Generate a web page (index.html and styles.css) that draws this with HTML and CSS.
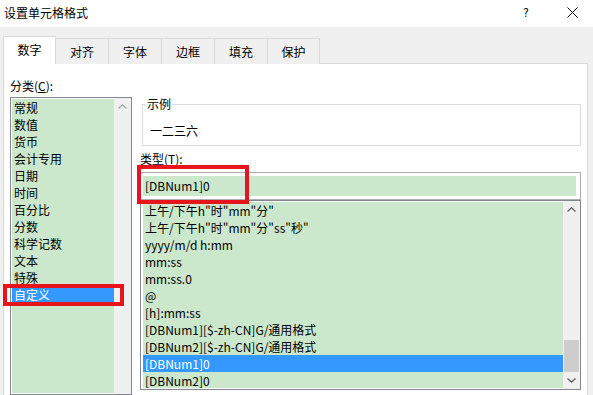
FILE: index.html
```html
<!DOCTYPE html>
<html lang="zh-CN">
<head>
<meta charset="utf-8">
<title>设置单元格格式</title>
<link rel="stylesheet" href="styles.css">
</head>
<body>
<div class="dialog">
  <div class="titlebar">
    <span class="title">设置单元格格式</span>
    <div class="title-btns">
      <span class="help">?</span>
      <svg class="close" width="11" height="11" viewBox="0 0 11 11"><path d="M0.5 0.5L10.5 10.5M10.5 0.5L0.5 10.5" stroke="#000" stroke-width="1" fill="none"/></svg>
    </div>
  </div>
  <div class="main">
    <div class="tabs">
      <div class="tab active">数字</div>
      <div class="tab">对齐</div>
      <div class="tab">字体</div>
      <div class="tab">边框</div>
      <div class="tab">填充</div>
      <div class="tab last">保护</div>
    </div>
    <div class="panel">
      <div class="left-col">
        <div class="label">分类(<u>C</u>):</div>
        <div class="listbox cat">
          <div class="items">
            <div class="item">常规</div>
            <div class="item">数值</div>
            <div class="item">货币</div>
            <div class="item">会计专用</div>
            <div class="item">日期</div>
            <div class="item">时间</div>
            <div class="item">百分比</div>
            <div class="item">分数</div>
            <div class="item">科学记数</div>
            <div class="item">文本</div>
            <div class="item">特殊</div>
            <div class="item sel">自定义</div>
          </div>
          <div class="vscroll disabled">
            <div class="sbtn"><svg width="9" height="5" viewBox="0 0 9 5"><path d="M0.5 4.5L4.5 0.8L8.5 4.5" stroke="currentColor" stroke-width="1.3" fill="none"/></svg></div>
          </div>
          <span class="redbox cat-red"></span>
        </div>
      </div>
      <div class="right-col">
        <fieldset class="sample">
          <legend>示例</legend>
          <div class="sample-val">一二三六</div>
        </fieldset>
        <div class="label type-label">类型(<u>T</u>):</div>
        <div class="typebox">
          <div class="typeinput">[DBNum1]0</div>
          <span class="redbox type-red"></span>
        </div>
        <div class="listbox fmt">
          <div class="items">
            <div class="item">上午/下午h"时"mm"分"</div>
            <div class="item">上午/下午h"时"mm"分"ss"秒"</div>
            <div class="item">yyyy/m/d h:mm</div>
            <div class="item">mm:ss</div>
            <div class="item">mm:ss.0</div>
            <div class="item">@</div>
            <div class="item">[h]:mm:ss</div>
            <div class="item">[DBNum1][$-zh-CN]G/通用格式</div>
            <div class="item">[DBNum2][$-zh-CN]G/通用格式</div>
            <div class="item sel">[DBNum1]0</div>
            <div class="item">[DBNum2]0</div>
          </div>
          <div class="vscroll">
            <div class="sbtn"><svg width="9" height="5" viewBox="0 0 9 5"><path d="M0.5 4.5L4.5 0.8L8.5 4.5" stroke="currentColor" stroke-width="1.3" fill="none"/></svg></div>
            <div class="track"><div class="thumb"></div></div>
            <div class="sbtn"><svg width="9" height="5" viewBox="0 0 9 5"><path d="M0.5 0.5L4.5 4.2L8.5 0.5" stroke="currentColor" stroke-width="1.3" fill="none"/></svg></div>
          </div>
        </div>
      </div>
    </div>
  </div>
</div>
</body>
</html>
```

FILE: styles.css
```css
html, body {
  margin: 0;
  padding: 0;
}
body {
  width: 593px;
  height: 395px;
  overflow: hidden;
  background: #f0f0f0;
  font-family: "Noto Sans CJK SC", "Microsoft YaHei", sans-serif;
  font-size: 12px;
  color: #000;
}
.dialog {
  display: flex;
  flex-direction: column;
  height: 395px;
}
.titlebar {
  height: 27px;
  flex: none;
  background: #fff;
  display: flex;
  align-items: center;
  padding-left: 4px;
  padding-bottom: 2px;
  box-sizing: border-box;
}
.title {
  font-size: 12px;
  line-height: 16px;
}
.title-btns {
  margin-left: auto;
  display: flex;
  align-items: center;
}
.help {
  width: 20px;
  text-align: center;
  font-size: 13px;
  line-height: 16px;
  margin-right: 31px;
  font-family: "DejaVu Sans", sans-serif;
  transform: scaleX(0.8);
}
.close {
  margin-right: 15px;
  display: block;
}
.main {
  flex: 1;
  display: flex;
  flex-direction: column;
  padding: 9px 5px 0 3px;
  min-height: 0;
}
.tabs {
  display: flex;
  align-items: flex-end;
  height: 28px;
  flex: none;
  position: relative;
  z-index: 1;
  margin-bottom: -1px;
}
.tab {
  box-sizing: border-box;
  width: 54px;
  height: 26px;
  border: 1px solid #d9d9d9;
  border-bottom: none;
  margin-left: -1px;
  display: flex;
  align-items: center;
  justify-content: center;
  background: #f0f0f0;
  line-height: 16px;
  padding-top: 1px;
}
.tab.active {
  width: 53px;
  height: 28px;
  margin-left: 0;
  background: #fff;
  border-color: #d9d9d9;
  padding-top: 0;
  padding-bottom: 2px;
}
.tab.last {
  width: 53px;
}
.panel {
  flex: 1;
  background: #fff;
  border: 1px solid #d9d9d9;
  border-bottom: none;
  display: flex;
  padding: 14px 5px 0 6px;
  gap: 8px;
  min-height: 0;
}
.label {
  line-height: 16px;
  height: 16px;
}
.left-col {
  width: 122px;
  flex: none;
  display: flex;
  flex-direction: column;
}
.left-col .label {
  margin-bottom: 3px;
}
.listbox {
  position: relative;
  box-sizing: border-box;
  border: 1px solid #828790;
  background: #fff;
  display: flex;
  padding: 1px 0 1px 1px;
}
.listbox .items {
  flex: 1;
  background: #cbe8cd;
  min-width: 0;
}
.item {
  height: 17px;
  line-height: 17px;
  padding-left: 2px;
  white-space: nowrap;
}
.item.sel {
  background: #3399ff;
  color: #fff;
}
.listbox.cat {
  height: 320px;
  padding-top: 1px;
}
.vscroll {
  width: 17px;
  flex: none;
  background: #f0f0f0;
  display: flex;
  flex-direction: column;
  color: #606060;
  margin-top: -1px;
  margin-bottom: -1px;
}
.vscroll.disabled {
  color: #a8a8a8;
}
.sbtn {
  height: 17px;
  display: flex;
  align-items: center;
  justify-content: center;
  flex: none;
}
.sbtn svg {
  display: block;
}
.track {
  flex: 1;
  display: flex;
  flex-direction: column;
  justify-content: flex-end;
}
.thumb {
  height: 32px;
  margin: 0 1px;
  background: #cdcdcd;
}
.redbox {
  position: absolute;
  z-index: 5;
  box-sizing: border-box;
  border: 4px solid #e8141b;
  pointer-events: none;
}
.cat-red {
  left: -8px;
  top: 186px;
  width: 121px;
  height: 22px;
}
.right-col {
  width: 442px;
  flex: none;
  display: flex;
  flex-direction: column;
}
.sample {
  margin: 18px 1px 0 2px;
  border: 1px solid #dcdcdc;
  padding: 0 0 6px 3px;
  min-width: 0;
}
.sample legend {
  padding: 0 1px;
  line-height: 16px;
  height: 16px;
}
.sample-val {
  margin-top: 11px;
  line-height: 16px;
  padding-left: 4px;
}
.type-label {
  margin-top: 5px;
}
.typebox {
  position: relative;
  z-index: 2;
  margin-top: 5px;
  box-sizing: border-box;
  height: 28px;
  width: 441px;
  border: 1px solid #abadb3;
  padding: 3px 4px 3px 2px;
}
.typeinput {
  background: #cbe8cd;
  height: 20px;
  line-height: 20px;
  padding-left: 2px;
}
.type-red {
  left: -4px;
  top: -8px;
  width: 112px;
  height: 39px;
}
.listbox.fmt {
  height: 190px;
  width: 441px;
  padding-left: 2px;
}
```
